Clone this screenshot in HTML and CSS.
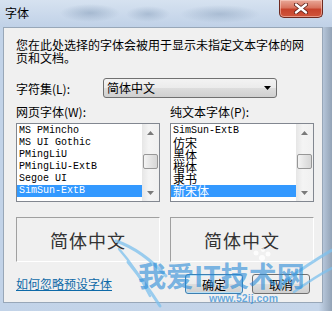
FILE: index.html
```html
<!DOCTYPE html>
<html lang="zh-CN">
<head>
    <meta charset="UTF-8">
    <title>字体</title>
    <link rel="stylesheet" href="styles.css">
</head>
<body>

<div class="window">
    <div class="titlebar">
        <span class="title">字体</span>
        <div class="close">
            <svg width="14" height="11" viewBox="0 0 14 11">
                <path d="M2 1.5 L12 9.5 M12 1.5 L2 9.5" stroke="#5a1c14" stroke-width="4" stroke-linecap="round"/>
                <path d="M2 1.5 L12 9.5 M12 1.5 L2 9.5" stroke="#ffffff" stroke-width="2.4" stroke-linecap="round"/>
            </svg>
        </div>
    </div>

    <div class="frame">
        <div class="panel">
            <p class="intro">您在此处选择的字体会被用于显示未指定文本字体的网页和文档。</p>

            <div class="charset">
                <span class="charset-label">字符集(L):</span>
                <div class="combo">
                    <span class="combo-text">简体中文</span>
                    <svg width="7" height="4" viewBox="0 0 7 4"><path d="M0 0 H7 L3.5 4 Z" fill="#000"/></svg>
                </div>
            </div>

            <div class="columns">
                <div class="col">
                    <div class="col-label">网页字体(W):</div>
                    <div class="listbox">
                        <div class="items">
                            <div class="item">MS PMincho</div>
                            <div class="item">MS UI Gothic</div>
                            <div class="item">PMingLiU</div>
                            <div class="item">PMingLiU-ExtB</div>
                            <div class="item">Segoe UI</div>
                            <div class="item sel">SimSun-ExtB</div>
                        </div>
                        <div class="scrollbar">
                            <div class="sb-btn"><svg width="7" height="4" viewBox="0 0 7 4"><path d="M0 4 H7 L3.5 0 Z" fill="#7a7a7a"/></svg></div>
                            <div class="sb-track"><div class="sb-thumb"></div></div>
                            <div class="sb-btn"><svg width="7" height="4" viewBox="0 0 7 4"><path d="M0 0 H7 L3.5 4 Z" fill="#7a7a7a"/></svg></div>
                        </div>
                    </div>
                    <div class="preview">简体中文</div>
                </div>

                <div class="col">
                    <div class="col-label">纯文本字体(P):</div>
                    <div class="listbox">
                        <div class="items">
                            <div class="item">SimSun-ExtB</div>
                            <div class="item cjk">仿宋</div>
                            <div class="item cjk">黑体</div>
                            <div class="item cjk">楷体</div>
                            <div class="item cjk">隶书</div>
                            <div class="item cjk sel">新宋体</div>
                        </div>
                        <div class="scrollbar">
                            <div class="sb-btn"><svg width="7" height="4" viewBox="0 0 7 4"><path d="M0 4 H7 L3.5 0 Z" fill="#7a7a7a"/></svg></div>
                            <div class="sb-track"><div class="sb-thumb"></div></div>
                            <div class="sb-btn"><svg width="7" height="4" viewBox="0 0 7 4"><path d="M0 0 H7 L3.5 4 Z" fill="#7a7a7a"/></svg></div>
                        </div>
                    </div>
                    <div class="preview">简体中文</div>
                </div>
            </div>

            <div class="footer">
                <a class="link" href="#">如何忽略预设字体</a>
                <button class="btn default">确定</button>
                <button class="btn">取消</button>
            </div>
        </div>
    </div>

    <!-- watermark over the dialog -->
    <div class="watermark">
        <svg width="332" height="311" viewBox="0 0 332 311">
            <g fill="none" stroke="#7dc1ee" stroke-linecap="round" opacity="0.75">
                <path d="M116 241 Q 142 250 166 276" stroke-width="3"/>
                <path d="M119 249 Q 136 268 150 296" stroke-width="2.5"/>
                <path d="M128 262 Q 146 284 160 306" stroke-width="3"/>
                <path d="M284 282 Q 308 264 332 250" stroke-width="3"/>
                <path d="M294 292 Q 316 276 332 268" stroke-width="2.5"/>
            </g>
            <g fill="#ffffff" opacity="0.8">
                <circle cx="262" cy="258" r="3"/>
                <circle cx="268" cy="254" r="2.5"/>
                <circle cx="256" cy="253" r="2.5"/>
                <circle cx="263" cy="250" r="2"/>
            </g>
        </svg>
        <span class="wm-title">我爱IT技术网</span>
        <span class="wm-url">www.52ij.com</span>
    </div>
</div>

</body>
</html>
```

FILE: styles.css
```css
body {
    margin: 0;
    font-family: "Noto Sans CJK SC", sans-serif;
    font-size: 12px;
    color: #000;
}
.window {
    position: relative;
    width: 332px;
    height: 311px;
    display: flex;
    flex-direction: column;
    overflow: hidden;
    background: linear-gradient(90deg, #c2d3e8 0, #c6d6ea 96%, #93a3b6 100%);
}
.titlebar {
    height: 27px;
    flex-shrink: 0;
    display: flex;
    align-items: flex-start;
    background:
        radial-gradient(ellipse 30px 9px at 90px 13px, rgba(120, 145, 175, 0.45), transparent),
        radial-gradient(ellipse 22px 8px at 148px 14px, rgba(120, 145, 175, 0.4), transparent),
        radial-gradient(ellipse 40px 9px at 220px 14px, rgba(120, 145, 175, 0.4), transparent),
        linear-gradient(#d6e2f0, #c0d1e7);
}
.title {
    margin: 6px 0 0 5px;
    line-height: 14px;
}
.close {
    margin-left: auto;
    margin-right: 9px;
    width: 44px;
    height: 18px;
    box-sizing: border-box;
    border: 1px solid #6e2a20;
    border-top: none;
    border-radius: 0 0 5px 5px;
    background: linear-gradient(#e9a898 0, #d8745f 45%, #c7432c 55%, #d0563c 100%);
    box-shadow: inset 0 0 0 1px rgba(255, 220, 210, 0.5);
    display: flex;
    align-items: center;
    justify-content: center;
}
.frame {
    flex: 1;
    display: flex;
    padding: 0 9px 8px 3px;
}
.panel {
    flex: 1;
    border: 1px solid #98a7b8;
    background: #f0f0f0;
    padding: 10px 8px 0 12px;
    display: flex;
    flex-direction: column;
}
.intro {
    margin: 0;
    line-height: 13px;
}
.charset {
    display: flex;
    align-items: center;
    height: 20px;
    margin-top: 14px;
}
.charset-label {
    width: 87px;
}
.combo {
    width: 174px;
    height: 20px;
    box-sizing: border-box;
    border: 1px solid #707070;
    border-radius: 3px;
    background: linear-gradient(#f3f3f3 0, #ebebeb 50%, #dddddd 50%, #d0d0d0 100%);
    display: flex;
    align-items: center;
    padding: 0 5px 0 3px;
}
.combo-text {
    flex: 1;
    line-height: 14px;
}
.columns {
    display: grid;
    grid-template-columns: 144px 144px;
    column-gap: 10px;
    margin-top: 7px;
}
.col {
    display: flex;
    flex-direction: column;
}
.col-label {
    line-height: 14px;
}
.listbox {
    margin-top: 4px;
    height: 79px;
    box-sizing: border-box;
    border: 1px solid #828790;
    background: #fff;
    display: flex;
}
.items {
    flex: 1;
    padding: 1px 0 4px;
    overflow: hidden;
}
.item {
    height: 12px;
    line-height: 12px;
    padding-left: 2px;
    white-space: nowrap;
    font-family: "Liberation Mono", "Noto Sans CJK SC", monospace;
    font-size: 10px;
}
.item.cjk {
    font-family: "Noto Sans CJK SC", sans-serif;
    font-size: 12px;
}
.item.sel {
    background: #3399ff;
    color: #fff;
}
.scrollbar {
    width: 17px;
    display: flex;
    flex-direction: column;
    background: linear-gradient(90deg, #e6e6e6, #f4f4f4 40%, #f0f0f0);
}
.sb-btn {
    height: 17px;
    display: flex;
    align-items: center;
    justify-content: center;
}
.sb-track {
    flex: 1;
}
.sb-thumb {
    margin: 13px 1px 0;
    height: 15px;
    box-sizing: border-box;
    border: 1px solid #979797;
    border-radius: 2px;
    background: linear-gradient(90deg, #f4f4f4, #e4e4e4 50%, #d6d6d6);
}
.preview {
    margin-top: 15px;
    height: 45px;
    box-sizing: border-box;
    border: 1px solid;
    border-color: #a0a0a0 #ffffff #ffffff #a0a0a0;
    display: flex;
    align-items: center;
    justify-content: center;
    font-size: 18px;
    letter-spacing: 1px;
    color: #333;
}
.footer {
    display: flex;
    align-items: center;
    height: 20px;
    margin-top: 12px;
}
.link {
    color: #0e6aa8;
    text-decoration: underline;
    line-height: 14px;
    margin-right: auto;
}
.btn {
    width: 58px;
    height: 20px;
    margin-left: 9px;
    margin-right: 0;
    padding: 0;
    font-family: "Noto Sans CJK SC", sans-serif;
    font-size: 12px;
    color: #000;
    border: 1px solid #707070;
    border-radius: 3px;
    background: linear-gradient(#f2f2f2 0, #ebebeb 50%, #dddddd 50%, #cfcfcf 100%);
}
.btn:last-child {
    margin-right: 4px;
}
.btn.default {
    border-color: #3c7fb1;
    box-shadow: inset 0 0 0 1px #b8e0f6;
}
.watermark {
    position: absolute;
    left: 0;
    top: 0;
    width: 332px;
    height: 311px;
    pointer-events: none;
}
.watermark svg {
    position: absolute;
    left: 0;
    top: 0;
}
.wm-title {
    position: absolute;
    left: 138px;
    top: 259px;
    line-height: 32px;
    font-size: 28px;
    font-weight: 700;
    color: rgba(40, 138, 215, 0.62);
    white-space: nowrap;
}
.wm-url {
    position: absolute;
    left: 209px;
    top: 292px;
    line-height: 13px;
    font-family: "Liberation Sans", sans-serif;
    font-size: 10.5px;
    font-weight: 700;
    color: rgba(40, 138, 215, 0.7);
}
```
